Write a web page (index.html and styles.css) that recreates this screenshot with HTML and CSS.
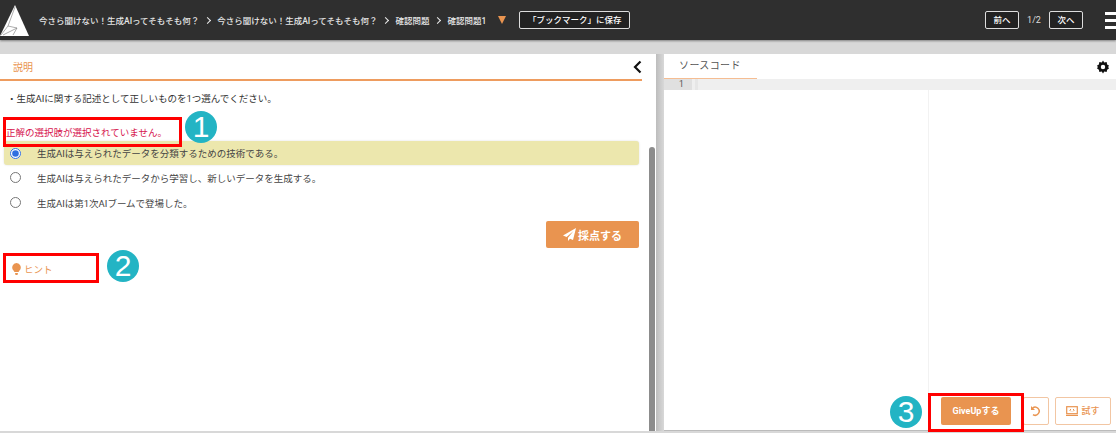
FILE: index.html
```html
<!DOCTYPE html>
<html lang="ja">
<head>
    <meta charset="UTF-8">
    <title>確認問題1</title>
    <link rel="stylesheet" href="styles.css">
</head>
<body>
    <header class="topbar">
        <svg class="logo" width="30" height="33" viewBox="0 0 30 33">
            <path d="M15 1 L29 32 L0 32 Z" fill="#fff"/>
            <path d="M15 3 L8 22 L1 31 M8 22 L17 24 L3 31 M17 24 L13 31" fill="none" stroke="#777" stroke-width="0.6"/>
        </svg>
        <nav class="crumbs">
            <span>今さら聞けない！生成AIってそもそも何？</span>
            <i class="sep"></i>
            <span>今さら聞けない！生成AIってそもそも何？</span>
            <i class="sep"></i>
            <span>確認問題</span>
            <i class="sep"></i>
            <span>確認問題1</span>
        </nav>
        <span class="tri"></span>
        <button class="bar-btn bookmark">「ブックマーク」に保存</button>
        <div class="pager">
            <button class="bar-btn">前へ</button>
            <span class="page-no">1/2</span>
            <button class="bar-btn">次へ</button>
        </div>
        <div class="burger"><i></i><i></i><i></i></div>
    </header>

    <main class="workspace">
        <section class="left">
            <div class="tabs">
                <span class="tab-active">説明</span>
                <svg class="collapse" width="9" height="14" viewBox="0 0 9 14"><path d="M7.5 1.5 L2 7 L7.5 12.5" fill="none" stroke="#111" stroke-width="2.2"/></svg>
            </div>
            <div class="body">
                <p class="question">・生成AIに関する記述として正しいものを1つ選んでください。</p>
                <p class="error">正解の選択肢が選択されていません。</p>
                <label class="choice selected"><input type="radio" name="c" checked><span>生成AIは与えられたデータを分類するための技術である。</span></label>
                <label class="choice"><input type="radio" name="c"><span>生成AIは与えられたデータから学習し、新しいデータを生成する。</span></label>
                <label class="choice"><input type="radio" name="c"><span>生成AIは第1次AIブームで登場した。</span></label>
                <div class="submit-row">
                    <button class="submit">
                        <svg width="13" height="13" viewBox="0 0 13 13"><path d="M13 0 L0 7.5 L3.6 9 L10.5 3 L5 9.8 L5 13 L7 10.8 L10 12 Z" fill="#fff"/></svg>
                        採点する
                    </button>
                </div>
                <div class="hint">
                    <svg width="9" height="12" viewBox="0 0 9 12"><path d="M4.5 0 A4.5 4.5 0 0 1 7.5 7.6 L6.5 9 L2.5 9 L1.5 7.6 A4.5 4.5 0 0 1 4.5 0 Z M3 10 L6 10 L5.5 12 L3.5 12 Z" fill="#e99450"/></svg>
                    ヒント
                </div>
            </div>
            <div class="scroll-track"><div class="scroll-thumb"></div></div>
        </section>

        <div class="divider"></div>

        <section class="right">
            <div class="tabs code-tabs">
                <span class="tab-code">ソースコード</span>
                <svg class="gear" width="14" height="14" viewBox="0 0 24 24"><path fill="#111" fill-rule="evenodd" d="M12 1l2.2 3.4 4-.9.9 4L22.5 9.7 20.6 12l1.9 2.3-3.4 2.2-.9 4-4-.9L12 23l-2.2-3.4-4 .9-.9-4L1.5 14.3 3.4 12 1.5 9.7l3.4-2.2.9-4 4 .9zM12 8.2a3.8 3.8 0 1 0 0 7.6 3.8 3.8 0 0 0 0-7.6z"/></svg>
            </div>
            <div class="line-row"><span class="line-no">1</span><span class="line-gap"></span></div>
            <div class="editor"></div>
            <div class="actions">
                <button class="giveup">GiveUpする</button>
                <button class="outline undo">
                    <svg width="12" height="12" viewBox="0 0 12 12"><path d="M2.5 3.2 A4 4 0 1 1 3 9.6" fill="none" stroke="#e99450" stroke-width="1.5"/><path d="M1 1 L1 5 L5 5 Z" fill="#e99450"/></svg>
                </button>
                <button class="outline try">
                    <svg width="12" height="10" viewBox="0 0 12 10"><rect x="0.7" y="0.7" width="10.6" height="7" fill="none" stroke="#e99450" stroke-width="1.2"/><path d="M0 9.4 H12" stroke="#e99450" stroke-width="1.2"/><path d="M5 3 L3.8 4.2 L5 5.4 M7 3 L8.2 4.2 L7 5.4" fill="none" stroke="#e99450"/></svg>
                    試す
                </button>
            </div>
        </section>
    </main>

    <!-- annotations on top of the screenshot -->
    <div class="mark mark-1"></div>
    <div class="mark mark-2"></div>
    <div class="mark mark-3"></div>
    <div class="num num-1">1</div>
    <div class="num num-2">2</div>
    <div class="num num-3">3</div>
</body>
</html>
```

FILE: styles.css
```css
* {
    box-sizing: border-box;
}

html, body {
    height: 100%;
}

body {
    margin: 0;
    overflow: hidden;
    font-family: Roboto, "Noto Sans CJK JP", sans-serif;
    background-color: #d8d8d8;
    color: #333;
    position: relative;
}

button {
    font-family: inherit;
    cursor: pointer;
}

.topbar {
    height: 40px;
    background-color: #2f2f2f;
    box-shadow: 0 1px 2px rgba(0,0,0,0.4);
    display: flex;
    align-items: center;
    color: #fff;
    padding-right: 0;
}

.logo {
    margin-left: 0;
    margin-top: 0;
    flex: none;
}

.crumbs {
    display: flex;
    align-items: center;
    margin-left: 9px;
    font-size: 8.5px;
    font-weight: 500;
    color: #e6e6e6;
}

.sep {
    width: 5px;
    height: 5px;
    border-top: 1px solid #eee;
    border-right: 1px solid #eee;
    transform: rotate(45deg);
    margin: 0 7px 0 6px;
}

.tri {
    width: 0;
    height: 0;
    margin-left: 12px;
    border-left: 4.5px solid transparent;
    border-right: 4.5px solid transparent;
    border-top: 8px solid #e99450;
}

.bar-btn {
    height: 18px;
    padding: 0 8px;
    background-color: #222;
    border: 1px solid #ddd;
    border-radius: 2px;
    color: #fff;
    font-size: 8.5px;
    font-weight: 500;
    line-height: 16px;
}

.bookmark {
    margin-left: 13px;
    width: 111px;
    padding: 0;
}

.pager {
    display: flex;
    align-items: center;
    margin-left: auto;
}

.pager .bar-btn {
    width: 34px;
    padding: 0;
}

.page-no {
    width: 30px;
    text-align: center;
    font-size: 9px;
    color: #ddd;
}

.burger {
    width: 11px;
    margin-left: 22px;
    flex: none;
    overflow: hidden;
}

.burger i {
    display: block;
    width: 11px;
    height: 3px;
    margin: 4px 0;
    background-color: #fff;
}

.workspace {
    display: flex;
    height: 377px;
    margin-top: 14px;
}

.left {
    width: 656px;
    background-color: #fff;
    position: relative;
    flex: none;
}

.tabs {
    height: 27px;
    display: flex;
    align-items: center;
    justify-content: space-between;
}

.left .tabs {
    width: 642px;
    height: 27px;
    border-bottom: 2px solid #ee9c5f;
    position: relative;
}

.tab-active {
    width: 44px;
    padding-left: 13px;
    font-size: 10px;
    color: #e99450;
}

.collapse {
    margin-right: 0;
}

.body {
    padding: 0 16px 0 0;
    width: 640px;
}

.question {
    margin: 0;
    padding: 9px 0 0 7px;
    height: 30px;
    font-size: 9.5px;
    line-height: 18px;
    color: #333;
}

.error {
    margin: 0;
    padding: 13px 0 0 6px;
    height: 30px;
    font-size: 9.5px;
    line-height: 18px;
    color: #d6144e;
}

.choice {
    display: flex;
    align-items: center;
    height: 25px;
    padding-left: 10px;
    font-size: 9.5px;
    color: #444;
}

.choice input {
    width: 11px;
    height: 11px;
    margin: 0 16px 0 0;
    accent-color: #2f6fe0;
    flex: none;
}

.choice.selected {
    background-color: #ece7ad;
    border-radius: 3px;
    height: 24px;
    margin: 0 0 0 4px;
    padding-left: 6px;
    box-shadow: 0 0 2px rgba(0,0,0,0.15);
    width: 635px;
}

.choice span {
    margin-left: 0;
}

.submit-row {
    display: flex;
    justify-content: flex-end;
    width: 639px;
    margin-top: 6px;
}

.submit {
    width: 93px;
    height: 27px;
    background-color: #e99450;
    border: none;
    border-radius: 2px;
    color: #fff;
    font-size: 11px;
    font-weight: 700;
    display: flex;
    align-items: center;
    justify-content: center;
    gap: 2px;
}

.hint {
    display: flex;
    align-items: center;
    gap: 3px;
    margin-top: 14px;
    padding-left: 12px;
    font-size: 9.5px;
    color: #e99450;
}

.scroll-track {
    position: absolute;
    top: 0;
    right: 0;
    bottom: 0;
    width: 14px;
}

.scroll-thumb {
    position: absolute;
    top: 93px;
    bottom: 0;
    left: 7px;
    width: 6px;
    border-radius: 3px 3px 0 0;
    background-color: #8c8c8c;
}

.divider {
    width: 8px;
    flex: none;
    background: linear-gradient(to right, #bdbdbd, #d8d8d8);
}

.right {
    flex: 1;
    display: flex;
    flex-direction: column;
    background-color: #fff;
    border-bottom: 1px solid #bbb;
    position: relative;
}

.code-tabs {
    height: 25px;
}

.tab-code {
    width: 93px;
    height: 25px;
    border-bottom: 1px solid #f5bd92;
    padding-left: 15px;
    font-size: 10px;
    line-height: 24px;
    color: #555;
    letter-spacing: 0.4px;
}

.gear {
    margin-right: 6px;
}

.line-row {
    display: flex;
    height: 11px;
    background-color: #efefef;
}

.line-no {
    width: 28px;
    background-color: #e0e0e0;
    padding-left: 15px;
    font-size: 8.5px;
    line-height: 11px;
    color: #555;
}

.line-gap {
    width: 3px;
    margin-left: 3px;
    background-color: #e6e6e6;
}

.editor {
    flex: 1;
    background: linear-gradient(#f2f2f2, #f2f2f2) no-repeat 264px 0 / 1px 100%;
}

.actions {
    display: flex;
    justify-content: flex-end;
    align-items: center;
    gap: 6px;
    height: 36px;
    padding: 0 5px 3px 0;
}

.giveup {
    width: 70px;
    height: 28px;
    margin-right: 6px;
    background-color: #e99450;
    border: none;
    border-radius: 2px;
    color: #fff;
    font-size: 9px;
    font-weight: 700;
}

.outline {
    height: 28px;
    background-color: #fff;
    border: 1px solid #f2c6a3;
    border-radius: 2px;
    color: #e99450;
    font-size: 9px;
    font-weight: 500;
    display: flex;
    align-items: center;
    justify-content: center;
    gap: 3px;
    padding: 0;
}

.undo {
    width: 26px;
}

.try {
    width: 56px;
}

.mark {
    position: absolute;
    border: 3px solid #f00;
}

.mark-1 {
    left: 3px;
    top: 117px;
    width: 179px;
    height: 30px;
}

.mark-2 {
    left: 3px;
    top: 253px;
    width: 96px;
    height: 30px;
}

.mark-3 {
    left: 928px;
    top: 393px;
    width: 96px;
    height: 39px;
}

.num {
    position: absolute;
    width: 32px;
    height: 32px;
    border-radius: 50%;
    background-color: #23b4c4;
    color: #fff;
    font-family: "Liberation Sans", sans-serif;
    font-size: 30px;
    line-height: 32px;
    text-align: center;
}

.num-1 {
    left: 185px;
    top: 111px;
}

.num-2 {
    left: 107px;
    top: 250px;
}

.num-3 {
    left: 890px;
    top: 396px;
}
```
